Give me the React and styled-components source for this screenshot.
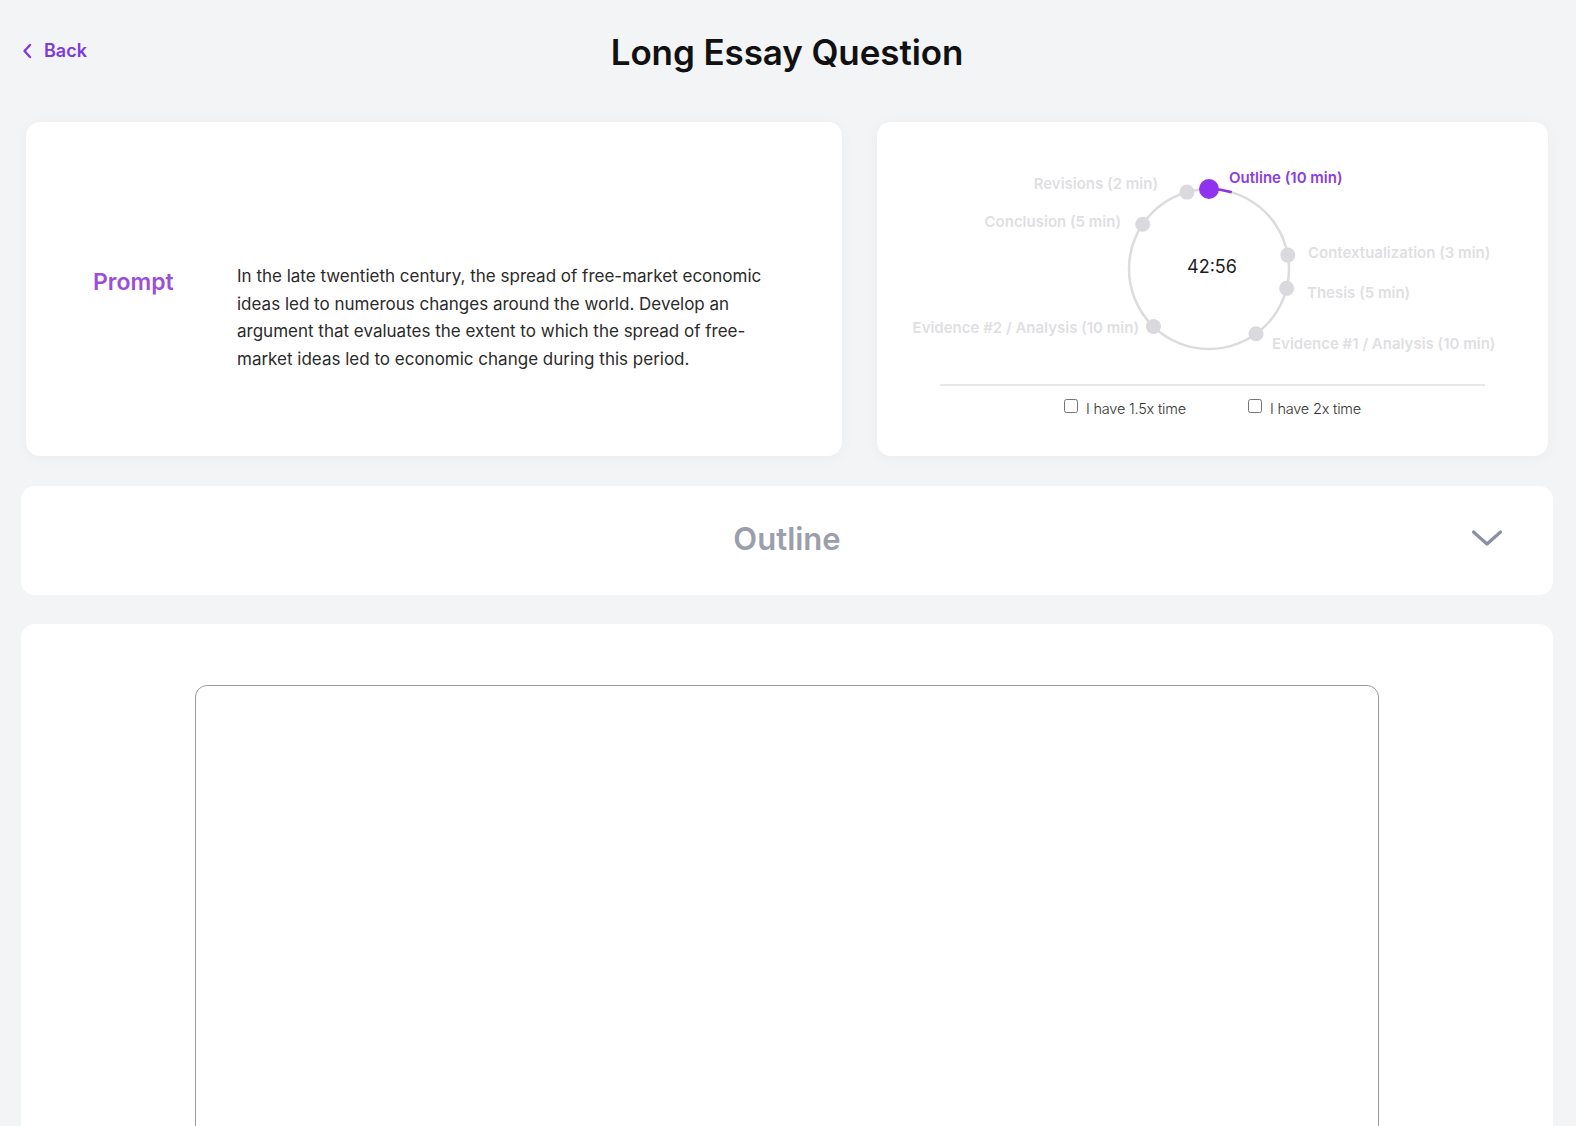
import styled, { createGlobalStyle } from 'styled-components';

const GlobalStyle = createGlobalStyle`
  html, body {
    margin: 0;
    padding: 0;
    background-color: #f3f4f6;
    font-family: Inter, "Noto Sans", sans-serif;
    color: #1a1a1a;
  }
  * {
    box-sizing: border-box;
  }
`;

const Page = styled.div`
  padding: 0 23px 0 21px;
`;

const Header = styled.header`
  display: grid;
  grid-template-columns: 1fr auto 1fr;
  align-items: center;
  height: 104px;
`;

const BackLink = styled.a`
  display: flex;
  align-items: center;
  gap: 12px;
  padding-left: 1px;
  margin-top: -3px;
  color: #7e3ae0;
  font-size: 18px;
  font-weight: 600;
  text-decoration: none;
  cursor: pointer;
`;

const Title = styled.h1`
  margin: 0;
  font-size: 35px;
  font-weight: 600;
  letter-spacing: -0.1px;
  color: #111;
`;

const TopRow = styled.div`
  display: grid;
  grid-template-columns: 816px 1fr;
  gap: 35px;
  margin: 18px 5px 0;
`;

const Card = styled.section`
  background-color: #fff;
  border-radius: 14px;
  box-shadow: ${(props) => (props.$soft ? '0 2px 14px rgba(30, 30, 60, 0.04)' : 'none')};
`;

const PromptCard = styled(Card)`
  display: flex;
  align-items: flex-start;
  height: 334px;
  padding: 141px 60px 0 67px;
`;

const PromptLabel = styled.h3`
  width: 144px;
  flex-shrink: 0;
  margin: 0;
  margin-top: 5px;
  color: #9b4fd6;
  font-size: 23px;
  font-weight: 600;
`;

const PromptText = styled.p`
  width: 540px;
  margin: 0;
  font-size: 17px;
  line-height: 27.5px;
  color: #2b2b2b;
  letter-spacing: 0;
`;

const TimerCard = styled(Card)`
  display: flex;
  flex-direction: column;
  align-items: center;
  height: 334px;
  padding-top: 40px;
`;

const Chart = styled.svg`
  display: block;
  width: 671px;
  height: 200px;
  font-family: Inter, "Noto Sans", sans-serif;
`;

const Divider = styled.div`
  width: 545px;
  height: 2px;
  margin-top: 22px;
  background-color: #e8e8ea;
`;

const CheckRow = styled.div`
  display: flex;
  gap: 62px;
  margin-top: 13px;
`;

const CheckLabel = styled.label`
  display: flex;
  align-items: center;
  gap: 8px;
  font-size: 14.5px;
  font-weight: 300;
  letter-spacing: -0.2px;
  color: #333;
`;

const CheckBox = styled.input`
  width: 14px;
  height: 14px;
  margin: 0 0 4px;
`;

const OutlineCard = styled(Card)`
  display: grid;
  grid-template-columns: 1fr auto 1fr;
  align-items: center;
  height: 109px;
  margin-top: 30px;
  padding: 0 50px 5px;
`;

const OutlineTitle = styled.h2`
  grid-column: 2;
  margin: 0;
  font-size: 31px;
  font-weight: 600;
  color: #9b9eab;
`;

const ChevronButton = styled.button`
  justify-self: end;
  display: flex;
  padding: 0;
  border: none;
  background: none;
  cursor: pointer;
`;

const EditorCard = styled(Card)`
  margin-top: 29px;
  padding: 61px 174px 40px;
`;

const Editor = styled.textarea`
  display: block;
  width: 100%;
  height: 560px;
  border: 1px solid #9a9a9f;
  border-radius: 12px;
  resize: none;
  outline: none;
  padding: 16px;
  font-family: Inter, sans-serif;
  font-size: 16px;
`;

const SECTIONS = [
  { name: 'Outline', min: 10 },
  { name: 'Contextualization', min: 3 },
  { name: 'Thesis', min: 5 },
  { name: 'Evidence #1 / Analysis', min: 10 },
  { name: 'Evidence #2 / Analysis', min: 10 },
  { name: 'Conclusion', min: 5 },
  { name: 'Revisions', min: 2 },
];

// label spots in chart coords
const LABELS = [
  { x: 352, y: 15, anchor: 'start' },
  { x: 431, y: 90, anchor: 'start' },
  { x: 430, y: 130, anchor: 'start' },
  { x: 395, y: 181, anchor: 'start' },
  { x: 262, y: 165, anchor: 'end' },
  { x: 244, y: 59, anchor: 'end' },
  { x: 281, y: 21, anchor: 'end' },
];

const CX = 332;
const CY = 107;
const R = 80;

const point = (deg) => {
  const a = (deg * Math.PI) / 180;
  return [CX + R * Math.sin(a), CY - R * Math.cos(a)];
};

function Timer({ remaining }) {
  const total = SECTIONS.reduce((sum, s) => sum + s.min, 0) * 60;
  const [mm, ss] = remaining.split(':').map(Number);
  const elapsed = total - (mm * 60 + ss);
  const progressDeg = (elapsed / total) * 360;
  const [px, py] = point(progressDeg);
  const [sx, sy] = point(0);

  let acc = 0;
  const dots = SECTIONS.map((s, i) => {
    const deg = (acc / 45) * 360;
    acc += s.min;
    return { ...s, deg, active: i === 0, label: LABELS[i] };
  });

  return (
    <Chart viewBox="0 0 671 200">
      <circle cx={CX} cy={CY} r={R} fill="none" stroke="#dcdce0" strokeWidth="2.5" />
      <path
        d={`M ${sx} ${sy} A ${R} ${R} 0 0 1 ${px} ${py}`}
        fill="none"
        stroke="#8b35e8"
        strokeWidth="2.5"
      />
      {dots.map((d) => {
        const [x, y] = point(d.deg);
        return (
          <circle
            key={d.name}
            cx={x}
            cy={y}
            r={d.active ? 10 : 7.5}
            fill={d.active ? '#8f33f0' : '#d9d9de'}
          />
        );
      })}
      {dots.map((d) => (
        <text
          key={d.name + '-label'}
          x={d.label.x}
          y={d.label.y}
          textAnchor={d.label.anchor}
          dominantBaseline="central"
          fontSize="15"
          fontWeight="600"
          fill={d.active ? '#8a3ee0' : '#dfdfe3'}
        >
          {d.name} ({d.min} min)
        </text>
      ))}
      <text x={CX + 3} y={CY - 3} textAnchor="middle" dominantBaseline="central" fontSize="18" fill="#1d1d1d">
        {remaining}
      </text>
    </Chart>
  );
}

function App() {
  return (
    <Page>
      <GlobalStyle />
      <Header>
        <BackLink>
          <svg width="10" height="16" viewBox="0 0 10 16" fill="none">
            <path d="M8 2L2.5 8L8 14" stroke="#7e3ae0" strokeWidth="2.4" strokeLinecap="round" strokeLinejoin="round" />
          </svg>
          Back
        </BackLink>
        <Title>Long Essay Question</Title>
      </Header>

      <TopRow>
        <PromptCard $soft>
          <PromptLabel>Prompt</PromptLabel>
          <PromptText>
            In the late twentieth century, the spread of free-market economic ideas led to numerous changes
            around the world. Develop an argument that evaluates the extent to which the spread of free-market
            ideas led to economic change during this period.
          </PromptText>
        </PromptCard>
        <TimerCard $soft>
          <Timer remaining="42:56" />
          <Divider />
          <CheckRow>
            <CheckLabel>
              <CheckBox type="checkbox" />
              I have 1.5x time
            </CheckLabel>
            <CheckLabel>
              <CheckBox type="checkbox" />
              I have 2x time
            </CheckLabel>
          </CheckRow>
        </TimerCard>
      </TopRow>

      <OutlineCard>
        <OutlineTitle>Outline</OutlineTitle>
        <ChevronButton aria-label="Expand outline">
          <svg width="32" height="18" viewBox="0 0 32 18" fill="none">
            <path d="M2.5 3L16 15L29.5 3" stroke="#8b90a0" strokeWidth="3.2" strokeLinecap="round" strokeLinejoin="round" />
          </svg>
        </ChevronButton>
      </OutlineCard>

      <EditorCard>
        <Editor />
      </EditorCard>
    </Page>
  );
}

export default App;
